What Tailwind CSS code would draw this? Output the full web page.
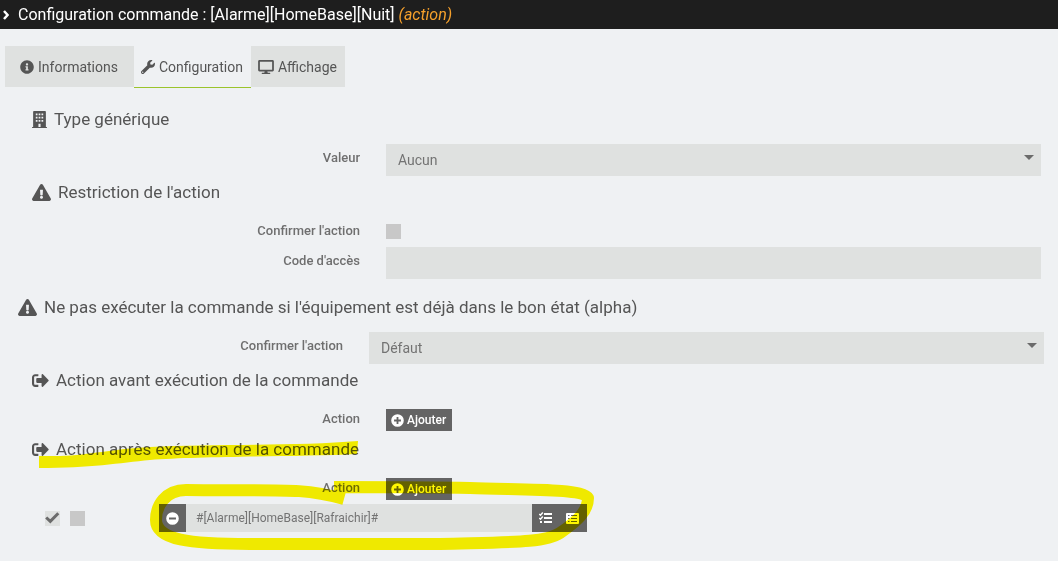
<!DOCTYPE html>
<html lang="fr">
<head>
<meta charset="utf-8">
<meta name="viewport" content="width=device-width, initial-scale=1">
<title>Configuration commande</title>
<script src="https://cdn.jsdelivr.net/npm/@tailwindcss/browser@4"></script>
</head>
<body class="relative min-h-screen bg-[#eff1f3] font-[Roboto,sans-serif] text-sm text-[#555555]">

<!-- Shared icons -->
<svg class="hidden" aria-hidden="true">
  <symbol id="warning" viewBox="0 0 576 512"><path d="M569.517 440.013C587.975 472.007 564.806 512 527.94 512H48.054c-36.937 0-59.999-40.055-41.577-71.987L246.423 23.985c18.467-32.009 64.72-31.951 83.154 0l239.94 416.028zM288 354c-25.405 0-46 20.595-46 46s20.595 46 46 46 46-20.595 46-46-20.595-46-46-46zm-43.673-165.346l7.418 136c.347 6.364 5.609 11.346 11.982 11.346h48.546c6.373 0 11.635-4.982 11.982-11.346l7.418-136c.375-6.874-5.098-12.654-11.982-12.654h-63.383c-6.884 0-12.356 5.78-11.981 12.654z"/></symbol>
  <symbol id="exit" viewBox="0 0 512 512"><path d="M497 273L329 441c-15 15-41 4.500-41-17v-96H152c-13.300 0-24-10.700-24-24v-96c0-13.300 10.700-24 24-24h136V88c0-21.400 25.900-32 41-17l168 168c9.300 9.400 9.300 24.600 0 34zM192 436v-40c0-6.600-5.400-12-12-12H96c-17.700 0-32-14.300-32-32V160c0-17.700 14.300-32 32-32h84c6.600 0 12-5.400 12-12V76c0-6.600-5.400-12-12-12H96c-53 0-96 43-96 96v192c0 53 43 96 96 96h84c6.600 0 12-5.400 12-12z"/></symbol>
  <symbol id="plus" viewBox="0 0 512 512"><path fill-rule="evenodd" d="M256 8a248 248 0 1 0 0 496a248 248 0 1 0 0-496zM220 120h72v100h100v72H292v100h-72V292H120v-72h100z"/></symbol>
  <symbol id="minus" viewBox="0 0 512 512"><path fill-rule="evenodd" d="M256 8a248 248 0 1 0 0 496a248 248 0 1 0 0-496zM120 220h272v72H120z"/></symbol>
  <symbol id="caret" viewBox="0 0 10 5"><path d="M0 0h10L5 5z"/></symbol>
</svg>

<header class="flex h-[29px] items-center bg-[#1e1e1e] pl-[3px] text-base text-white">
  <svg class="mr-[9px] h-[10px] w-[6px] fill-none stroke-white stroke-[2.5]" viewBox="0 0 6 10"><path d="M1 1 4.600 5 1 9"/></svg>
  <h1 class="pt-px">Configuration commande : [Alarme][HomeBase][Nuit] <em class="text-[#f5a02c]">(action)</em></h1>
</header>

<main>
  <nav class="mt-[17px] ml-[5px] flex h-[41px]">
    <a href="#informations" class="flex items-center gap-1 bg-[#dfe1e0] pr-4 pl-[15px]">
      <svg class="size-[14px] fill-current" viewBox="0 0 512 512"><path d="M256 8C119.043 8 8 119.083 8 256c0 136.997 111.043 248 248 248s248-111.003 248-248C504 119.083 392.957 8 256 8zm0 110c23.196 0 42 18.804 42 42s-18.804 42-42 42-42-18.804-42-42 18.804-42 42-42zm56 254c0 6.627-5.373 12-12 12h-88c-6.627 0-12-5.373-12-12v-24c0-6.627 5.373-12 12-12h12v-64h-12c-6.627 0-12-5.373-12-12v-24c0-6.627 5.373-12 12-12h64c6.627 0 12 5.373 12 12v100h12c6.627 0 12 5.373 12 12v24z"/></svg>
      <span>Informations</span>
    </a>
    <a href="#configuration" class="flex items-center gap-1 pr-2 pl-[7px] shadow-[0_1px_0_#9bc42c]" aria-current="page">
      <svg class="size-[14px] fill-current" viewBox="0 0 512 512"><path d="M507.730 109.100c-2.240-9.030-13.540-12.090-20.120-5.510l-74.360 74.360-67.880-11.310-11.310-67.880 74.360-74.360c6.620-6.620 3.430-17.900-5.660-20.160-47.380-11.740-99.550.91-136.580 37.930-39.640 39.640-50.550 97.100-34.050 147.200L18.740 402.760c-24.990 24.990-24.990 65.510 0 90.500 24.990 24.990 65.510 24.990 90.500 0l213.210-213.210c50.120 16.710 107.470 5.680 147.370-34.220 37.070-37.070 49.700-89.320 37.910-136.730zM64 472c-13.250 0-24-10.750-24-24 0-13.260 10.750-24 24-24s24 10.740 24 24c0 13.250-10.750 24-24 24z"/></svg>
      <span>Configuration</span>
    </a>
    <a href="#affichage" class="flex items-center gap-1 bg-[#dfe1e0] pr-2 pl-[7px]">
      <svg class="h-[14px] w-4 fill-current" viewBox="0 0 576 512"><path d="M528 0H48C21.500 0 0 21.500 0 48v320c0 26.500 21.500 48 48 48h192l-16 48h-72c-13.300 0-24 10.700-24 24s10.700 24 24 24h272c13.300 0 24-10.700 24-24s-10.700-24-24-24h-72l-16-48h192c26.500 0 48-21.500 48-48V48c0-26.500-21.500-48-48-48zm-16 352H64V64h448v288z"/></svg>
      <span>Affichage</span>
    </a>
  </nav>

  <form class="pb-7">
    <h2 class="mt-[22px] flex h-5 items-center gap-[7px] pl-8 text-[17px]">
      <svg class="h-[17px] w-[15px] fill-current" viewBox="0 0 448 512"><path fill-rule="evenodd" d="M436 480h-20V24c0-13.255-10.745-24-24-24H56C42.745 0 32 10.745 32 24v456H12c-6.627 0-12 5.373-12 12v20h448v-20c0-6.627-5.373-12-12-12zM112 76h52v52h-52zM198 76h52v52h-52zM284 76h52v52h-52zM112 172h52v52h-52zM198 172h52v52h-52zM284 172h52v52h-52zM112 268h52v52h-52zM198 268h52v52h-52zM284 268h52v52h-52zM192 384h64v96h-64z"/></svg>
      Type générique
    </h2>
    <div class="mt-[15px] grid grid-cols-[360px_1fr] gap-[26px] pr-[17px]">
      <label for="generic" class="pt-1 text-right text-[13px] leading-5 font-medium text-[#6f6f6f]">Valeur</label>
      <div class="relative">
        <select id="generic" class="h-8 w-full appearance-none bg-[#dfe1e0] px-3 text-[#737373]"><option>Aucun</option></select>
        <svg class="pointer-events-none absolute top-[11px] right-[7px] h-[5px] w-[10px] fill-[#6b6b6b]"><use href="#caret"/></svg>
      </div>
    </div>

    <h2 class="mt-[6px] flex h-5 items-center gap-[7px] pl-8 text-[17px]">
      <svg class="h-[17px] w-[19px] fill-current"><use href="#warning"/></svg>
      Restriction de l'action
    </h2>
    <div class="mt-[15px] grid h-[30px] grid-cols-[360px_1fr] gap-[26px] pr-[17px]">
      <label for="confirm" class="pt-1 text-right text-[13px] leading-5 font-medium text-[#6f6f6f]">Confirmer l'action</label>
      <input id="confirm" type="checkbox" class="mt-[7px] size-[15px] appearance-none bg-[#c8c8c8]">
    </div>
    <div class="grid grid-cols-[360px_1fr] gap-[26px] pr-[17px]">
      <label for="code" class="pt-1 text-right text-[13px] leading-5 font-medium text-[#6f6f6f]">Code d'accès</label>
      <input id="code" type="text" class="h-8 w-full bg-[#dfe1e0] px-3 text-[#737373]">
    </div>

    <h2 class="mt-[18px] flex h-5 items-center gap-[7px] pl-[18px] text-[17px]">
      <svg class="h-[17px] w-[19px] fill-current"><use href="#warning"/></svg>
      Ne pas exécuter la commande si l'équipement est déjà dans le bon état (alpha)
    </h2>
    <div class="mt-[15px] grid grid-cols-[343px_1fr] gap-[26px] pr-[14px]">
      <label for="state" class="pt-1 text-right text-[13px] leading-5 font-medium text-[#6f6f6f]">Confirmer l'action</label>
      <div class="relative">
        <select id="state" class="h-8 w-full appearance-none bg-[#dfe1e0] px-3 text-[#737373]"><option>Défaut</option></select>
        <svg class="pointer-events-none absolute top-[11px] right-[7px] h-[5px] w-[10px] fill-[#6b6b6b]"><use href="#caret"/></svg>
      </div>
    </div>

    <h2 class="mt-[6px] flex h-5 items-center gap-[7px] pl-8 text-[17px]">
      <svg class="size-[17px] fill-current"><use href="#exit"/></svg>
      Action avant exécution de la commande
    </h2>
    <div class="mt-[19px] grid grid-cols-[360px_1fr] gap-[26px] pr-[17px]">
      <label for="add-before" class="text-right text-[13px] leading-5 font-medium text-[#6f6f6f]">Action</label>
      <button id="add-before" type="button" class="flex h-[22px] items-center gap-[3px] justify-self-start bg-[#646464] pr-[6px] pl-[5px] text-xs font-medium text-white">
        <svg class="size-[13px] fill-current"><use href="#plus"/></svg>Ajouter
      </button>
    </div>

    <h2 class="mt-2 flex h-5 items-center gap-[7px] pl-8 text-[17px]">
      <svg class="size-[17px] fill-current"><use href="#exit"/></svg>
      Action après exécution de la commande
    </h2>
    <div class="mt-[19px] grid grid-cols-[360px_1fr] gap-[26px] pr-[17px]">
      <label for="add-after" class="text-right text-[13px] leading-5 font-medium text-[#6f6f6f]">Action</label>
      <button id="add-after" type="button" class="flex h-[22px] items-center gap-[3px] justify-self-start bg-[#646464] pr-[6px] pl-[5px] text-xs font-medium text-white">
        <svg class="size-[13px] fill-current"><use href="#plus"/></svg>Ajouter
      </button>
    </div>

    <div class="mt-1 flex items-center pl-[45px]">
      <label class="relative mr-[10px] block size-[15px]">
        <input type="checkbox" checked aria-label="Activer l'action" class="block size-[15px] appearance-none bg-[#dfe1e0]">
        <svg class="pointer-events-none absolute inset-0 size-[15px] fill-none stroke-[#6b6b6b] stroke-3" viewBox="0 0 15 15"><path d="M1.200 6.500 5.300 10.300 13.300 2.300"/></svg>
      </label>
      <input type="checkbox" aria-label="Exécuter en parallèle" class="mr-[74px] size-[15px] appearance-none bg-[#c8c8c8]">
      <button type="button" aria-label="Supprimer l'action" class="grid h-7 w-[27px] place-items-center bg-[#646464] text-white"><svg class="size-[13px] fill-current"><use href="#minus"/></svg></button>
      <input type="text" aria-label="Commande" value="#[Alarme][HomeBase][Rafraichir]#" class="h-7 w-[346px] bg-[#dfe1e0] px-[10px] text-xs text-[#737373]">
      <button type="button" aria-label="Choisir une action" class="grid h-7 w-[27px] place-items-center bg-[#646464] text-white">
        <svg class="h-3 w-[13px] fill-current" viewBox="0 0 13 12"><path d="M5 1h8v2H5zM5 5h8v2H5zM5 9h8v2H5zM1 9h2v2H1z"/><path class="fill-none stroke-white stroke-[1.5]" d="M.3 2 1.500 3.200 3.800.6M.3 6 1.500 7.200 3.800 4.600"/></svg>
      </button>
      <button type="button" aria-label="Choisir une commande" class="grid h-7 w-7 place-items-center bg-[#646464] pr-px text-white">
        <svg class="h-[11px] w-[13px] fill-current" viewBox="0 0 13 11"><path fill-rule="evenodd" d="M1 0h11q1 0 1 1v9q0 1-1 1H1q-1 0-1-1V1Q0 0 1 0zM2 2v1h1.500V2zM5 2v1h6V2zM2 5v1h1.500V5zM5 5v1h6V5zM2 8v1h1.500V8zM5 8v1h6V8z"/></svg>
      </button>
    </div>
  </form>
</main>

<!-- Highlighter strokes drawn over the form -->
<svg class="pointer-events-none absolute top-0 left-0 mix-blend-multiply" width="620" height="561" viewBox="0 0 620 561" aria-hidden="true">
  <path fill="#fff700" d="M39 456H60C90 455 112 449 150 447C210 444 300 446 358 441L357 454C300 457 200 456 150 460C120 463 90 468 39 468Z"/>
  <path fill="none" stroke="#fff700" stroke-width="12" stroke-linejoin="round" d="M344 499C300 487 280 491 186 490C165 490 156 506 156 520C156 540 190 544 250 544H440C510 542 545 543 560 533C576 522 588 512 588 498C583 488 520 490 470 488C430 487 390 487 334 487"/>
</svg>
</body>
</html>
